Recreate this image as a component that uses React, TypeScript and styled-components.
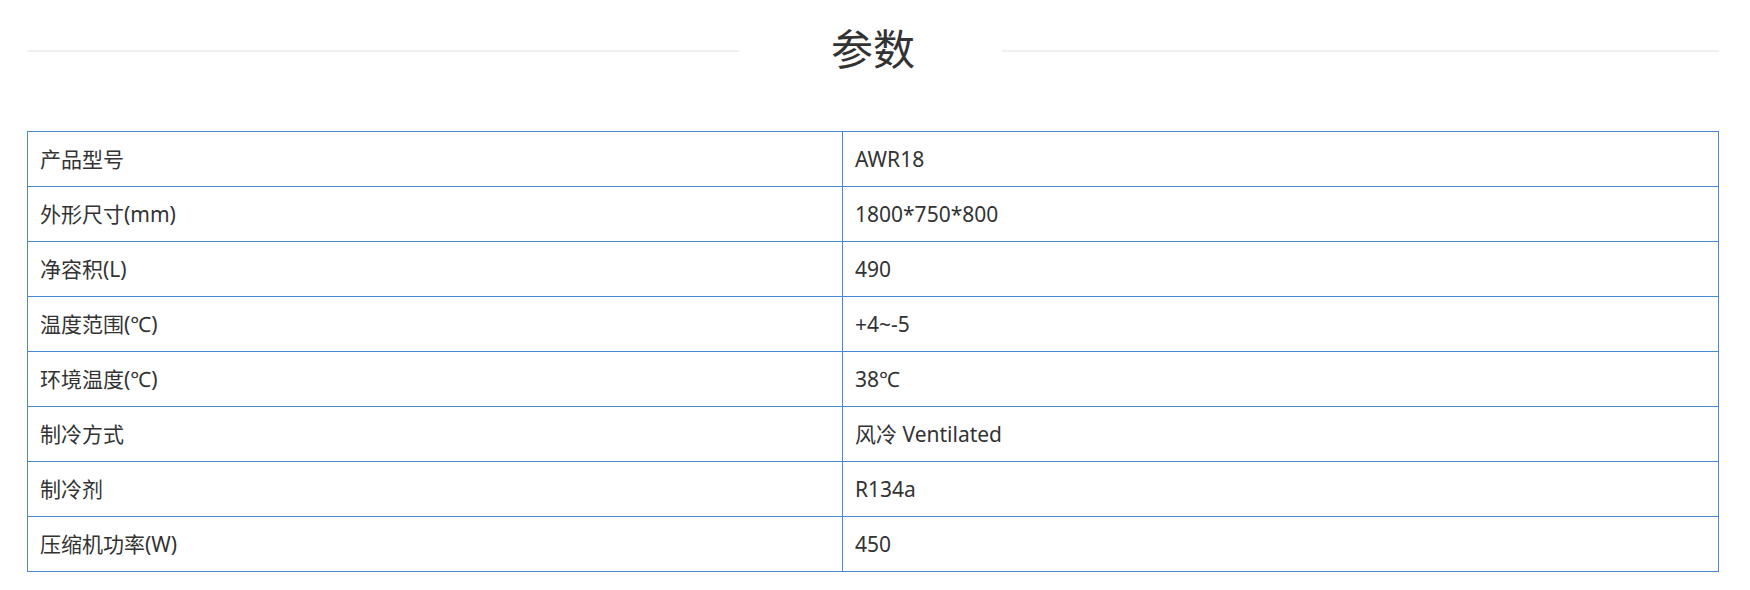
import React from "react";
import styled, { createGlobalStyle } from "styled-components";

const GlobalStyle = createGlobalStyle`
  html, body {
    margin: 0;
    padding: 0;
    background: #ffffff;
  }
  body {
    font-family: "Noto Sans", "Noto Sans CJK SC", sans-serif;
    color: #333333;
  }
`;

const Page = styled.div`
  width: 1692px;
  margin-left: 27px;
  padding-bottom: 19px;
`;

const Header = styled.div`
  display: grid;
  grid-template-columns: 712px 263px 1fr;
  align-items: center;
  height: 102px;
`;

const Rule = styled.div`
  height: 2px;
  background: #f0f0f0;
`;

const Title = styled.h2`
  margin: 0 0 8px;
  padding-left: 5px;
  text-align: center;
  font-family: "Noto Sans CJK SC", sans-serif;
  font-size: 42px;
  font-weight: 400;
  line-height: 1;
  color: #333333;
`;

const Table = styled.table`
  width: 1692px;
  margin-top: 29px;
  border-collapse: collapse;
  table-layout: fixed;
`;

const Col = styled.col<{ $w?: number }>`
  width: ${(p) => (p.$w ? `${p.$w}px` : "auto")};
`;

const Cell = styled.td`
  height: 54px;
  padding: 0 12px;
  border: 1px solid #4a87d4;
  font-size: 21px;
  line-height: 1;
  color: #333333;
  vertical-align: middle;
  white-space: nowrap;
`;

const rows: [string, string][] = [
  ["产品型号", "AWR18"],
  ["外形尺寸(mm)", "1800*750*800"],
  ["净容积(L)", "490"],
  ["温度范围(℃)", "+4~-5"],
  ["环境温度(℃)", "38℃"],
  ["制冷方式", "风冷 Ventilated"],
  ["制冷剂", "R134a"],
  ["压缩机功率(W)", "450"],
];

export default function App() {
  return (
    <>
      <GlobalStyle />
      <Page>
        <Header>
          <Rule />
          <Title>参数</Title>
          <Rule />
        </Header>
        <Table>
          <colgroup>
            <Col $w={815} />
            <Col />
          </colgroup>
          <tbody>
            {rows.map(([k, v]) => (
              <tr key={k}>
                <Cell>{k}</Cell>
                <Cell>{v}</Cell>
              </tr>
            ))}
          </tbody>
        </Table>
      </Page>
    </>
  );
}
